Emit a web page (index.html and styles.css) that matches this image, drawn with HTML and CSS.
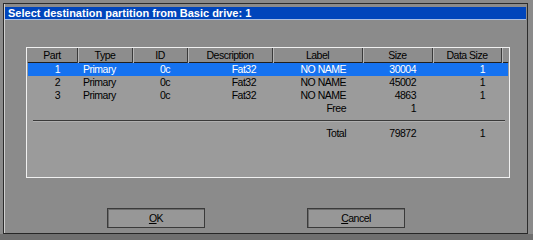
FILE: index.html
```html
<!DOCTYPE html>
<html>
<head>
<meta charset="utf-8">
<link rel="stylesheet" href="styles.css">
</head>
<body>
<div class="screen">
  <div class="dialog">
    <div class="titlebar">Select destination partition from Basic drive: 1</div>
    <div class="panel">
      <div class="grid header">
        <div class="hc">Part</div>
        <div class="hc">Type</div>
        <div class="hc">ID</div>
        <div class="hc">Description</div>
        <div class="hc">Label</div>
        <div class="hc">Size</div>
        <div class="hc">Data Size</div>
      </div>
      <div class="grid row selected">
        <div class="c part">1</div>
        <div class="c type">Primary</div>
        <div class="c id">0c</div>
        <div class="c r">Fat32</div>
        <div class="c r">NO NAME</div>
        <div class="c r">30004</div>
        <div class="c r">1</div>
      </div>
      <div class="grid row">
        <div class="c part">2</div>
        <div class="c type">Primary</div>
        <div class="c id">0c</div>
        <div class="c r">Fat32</div>
        <div class="c r">NO NAME</div>
        <div class="c r">45002</div>
        <div class="c r">1</div>
      </div>
      <div class="grid row">
        <div class="c part">3</div>
        <div class="c type">Primary</div>
        <div class="c id">0c</div>
        <div class="c r">Fat32</div>
        <div class="c r">NO NAME</div>
        <div class="c r">4863</div>
        <div class="c r">1</div>
      </div>
      <div class="grid row">
        <div class="c part"></div>
        <div class="c type"></div>
        <div class="c id"></div>
        <div class="c r"></div>
        <div class="c r">Free</div>
        <div class="c r">1</div>
        <div class="c r"></div>
      </div>
      <div class="sep"></div>
      <div class="grid row total">
        <div class="c part"></div>
        <div class="c type"></div>
        <div class="c id"></div>
        <div class="c r"></div>
        <div class="c r">Total</div>
        <div class="c r">79872</div>
        <div class="c r">1</div>
      </div>
    </div>
    <div class="buttons">
      <div class="btn"><u>O</u>K</div>
      <div class="btn"><u>C</u>ancel</div>
    </div>
  </div>
</div>
</body>
</html>
```
FILE: styles.css
```css
html, body {
  margin: 0;
  padding: 0;
}
body {
  width: 533px;
  height: 240px;
  background: #6f6f6f;
  overflow: hidden;
  font-family: "Liberation Sans", Arial, sans-serif;
  font-size: 10.5px;
  letter-spacing: -0.5px;
  color: #000;
}
.screen {
  height: 234px;
  background: #8a8a8a;
  padding: 3px 0 0 3px;
  box-sizing: border-box;
}
.dialog {
  width: 525px;
  height: 231px;
  box-sizing: border-box;
  border: 1px solid #2c2c2c;
  border-bottom-color: #262626;
  background: #8b8b8b;
  padding: 3px 1px 0 1px;
  display: flex;
  flex-direction: column;
  box-shadow: inset 1px 0 0 #d0d0d0;
}
.titlebar {
  height: 12px;
  background: #0045bb;
  border-bottom: 1px solid #a9bde0;
  color: #fff;
  font-family: "Liberation Sans", Arial, sans-serif;
  font-weight: bold;
  font-size: 11px;
  letter-spacing: 0;
  line-height: 12px;
  padding-left: 3px;
  white-space: nowrap;
}
.panel {
  margin: 27px 0 0 21px;
  width: 484px;
  height: 131px;
  box-sizing: border-box;
  border: 1px solid #f0f0f0;
  background: #9b9b9b;
}
.grid {
  display: grid;
  grid-template-columns: 51px 55px 55px 85px 90px 70px 69px;
}
.header {
  height: 15px;
  background: #8d8d8d;
  border-bottom: 1px solid #7c7c7c;
  box-sizing: border-box;
}
.hc {
  text-align: center;
  line-height: 15px;
  border-right: 1px solid #3a3a3a;
  box-shadow: 1px 0 0 #b5b5b5;
  white-space: nowrap;
}
.row {
  height: 13px;
  line-height: 13px;
  margin-left: 1px;
  width: 480px;
}
.row.selected {
  background: #1572f0;
  color: #fff;
  box-shadow: 0 -1px 0 #1f1f1f;
}
.c {
  white-space: nowrap;
}
.part {
  text-align: right;
  padding-right: 19px;
}
.type {
  text-align: left;
  padding-left: 4px;
}
.id {
  text-align: left;
  padding-left: 26px;
}
.r {
  text-align: right;
  padding-right: 18px;
}
.sep {
  height: 1px;
  background: #3a3a3a;
  margin: 5px 0 6px 6px;
  width: 472px;
  box-shadow: 0 1px 0 #b0b0b0;
}
.buttons {
  margin-top: 30px;
  padding-left: 102px;
  display: flex;
  gap: 102px;
}
.btn {
  width: 98px;
  height: 20px;
  box-sizing: border-box;
  border: 1px solid #3a3a3a;
  background: #979797;
  box-shadow: inset 1px 1px 0 #6c6c6c;
  text-align: center;
  line-height: 18px;
}
.btn u {
  text-decoration: underline;
  text-underline-offset: 1px;
}
```
